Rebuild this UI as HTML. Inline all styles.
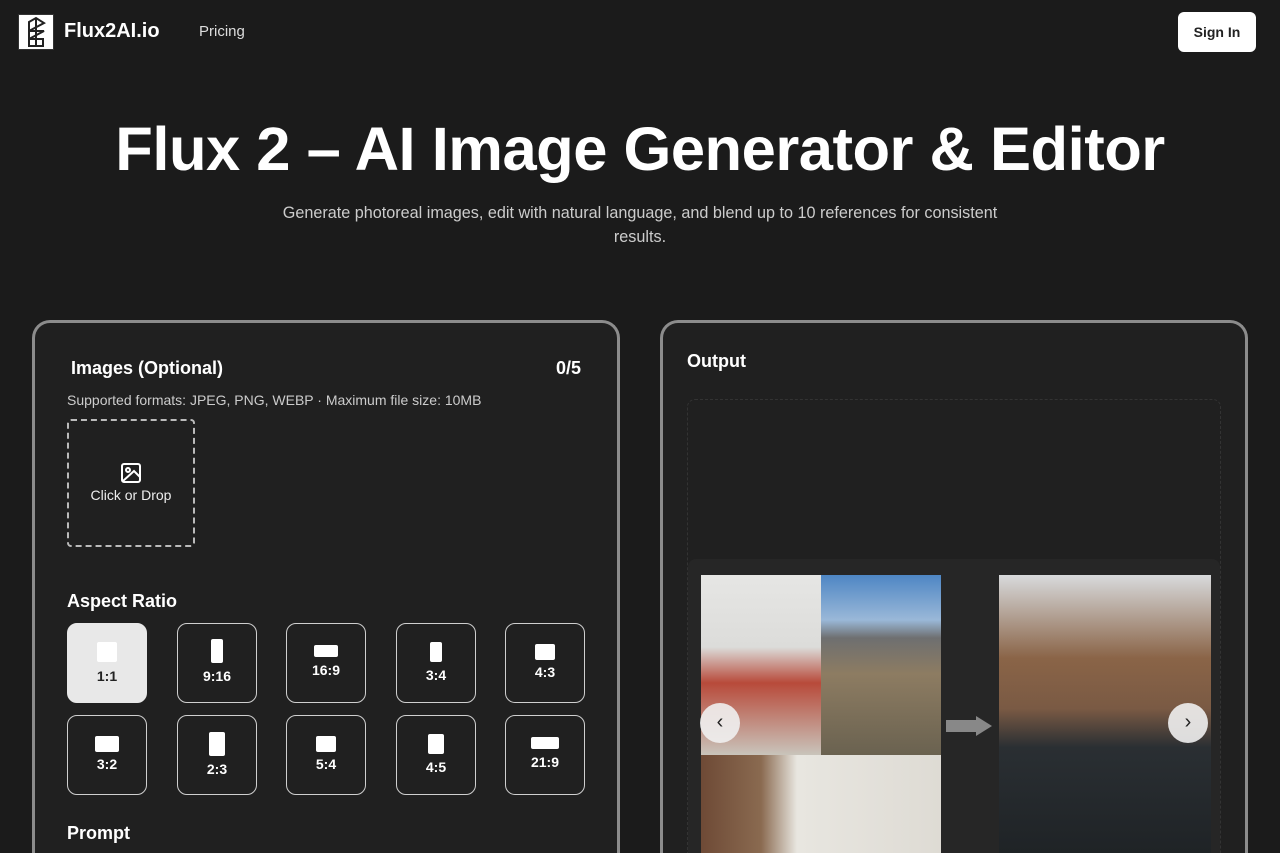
<!DOCTYPE html>
<html><head><style>
*{box-sizing:border-box;margin:0;padding:0}
html,body{width:1280px;height:853px;overflow:hidden}
body{background:#1b1b1b;font-family:"Liberation Sans",sans-serif;color:#fff}
#w{position:relative;width:1280px;height:853px;overflow:hidden}
.a{position:absolute}
.logo{left:18px;top:14px;width:36px;height:36px;background:#fff;border:1px solid #333}
.card{border:3px solid #8c8c8c;border-bottom:none;border-radius:18px 18px 0 0;background:#202020}
.btn{position:absolute;width:80px;height:80px;border:1px solid #cfcfcf;border-radius:10px;text-align:center;font-size:14px;font-weight:bold}
.btn i{display:block;background:#fff;border-radius:2px;margin:0 auto}
.btn.sel{background:#e8e8e8;color:#222;border-color:#e8e8e8}
</style></head><body><div id="w">
<div class="a logo"><svg width="34" height="34" viewBox="0 0 34 34" fill="none" stroke="#222" stroke-width="2"><path d="M10 7 L17 3 L25 8 L10 16 L25 16 L10 24 L24 24 L24 31 L10 31 Z M17 3 L17 31"/></svg></div>
<div class="a" style="left:64px;top:20px;font-size:20px;font-weight:bold">Flux2AI.io</div>
<div class="a" style="left:199px;top:23px;font-size:15px;color:#ddd">Pricing</div>
<div class="a" style="left:1178px;top:12px;width:78px;height:40px;background:#fff;border-radius:6px;color:#222;font-size:14px;font-weight:bold;text-align:center;line-height:40px">Sign In</div>
<div class="a" style="left:0;width:1280px;top:114px;text-align:center;font-size:61.5px;font-weight:bold;letter-spacing:-0.5px">Flux 2 – AI Image Generator &amp; Editor</div>
<div class="a" style="left:262px;width:756px;top:201px;text-align:center;font-size:16.2px;line-height:24px;color:#ccc">Generate photoreal images, edit with natural language, and blend up to 10 references for consistent results.</div>

<div class="a card" style="left:32px;top:320px;width:588px;height:533px"></div>
<div class="a" style="left:71px;top:358px;font-size:18px;font-weight:bold">Images (Optional)</div>
<div class="a" style="left:556px;top:358px;font-size:18px;font-weight:bold">0/5</div>
<div class="a" style="left:67px;top:392px;font-size:14px;color:#ccc">Supported formats: JPEG, PNG, WEBP · Maximum file size: 10MB</div>
<div class="a" style="left:67px;top:419px;width:128px;height:128px;border:2px dashed #bbb;border-radius:4px;text-align:center;font-size:14px;color:#eee;padding-top:41px">
<svg width="22" height="22" viewBox="0 0 22 22" fill="none" stroke="#fff" stroke-width="2"><rect x="2" y="2" width="18" height="18" rx="2"/><circle cx="8" cy="8" r="2"/><path d="M3 19 L14 9 L20 15"/></svg><br>Click or Drop</div>
<div class="a" style="left:67px;top:591px;font-size:18px;font-weight:bold">Aspect Ratio</div>

<div class="btn sel" style="left:67px;top:623px"><i style="width:20px;height:20px;margin-top:18px"></i><div style="margin-top:6px">1:1</div></div>
<div class="btn" style="left:177px;top:623px"><i style="width:12px;height:24px;margin-top:15px"></i><div style="margin-top:5px">9:16</div></div>
<div class="btn" style="left:286px;top:623px"><i style="width:24px;height:12px;margin-top:21px"></i><div style="margin-top:5px">16:9</div></div>
<div class="btn" style="left:396px;top:623px"><i style="width:12px;height:20px;margin-top:18px"></i><div style="margin-top:5px">3:4</div></div>
<div class="btn" style="left:505px;top:623px"><i style="width:20px;height:16px;margin-top:20px"></i><div style="margin-top:4px">4:3</div></div>
<div class="btn" style="left:67px;top:715px"><i style="width:24px;height:16px;margin-top:20px"></i><div style="margin-top:4px">3:2</div></div>
<div class="btn" style="left:177px;top:715px"><i style="width:16px;height:24px;margin-top:16px"></i><div style="margin-top:5px">2:3</div></div>
<div class="btn" style="left:286px;top:715px"><i style="width:20px;height:16px;margin-top:20px"></i><div style="margin-top:4px">5:4</div></div>
<div class="btn" style="left:396px;top:715px"><i style="width:16px;height:20px;margin-top:18px"></i><div style="margin-top:5px">4:5</div></div>
<div class="btn" style="left:505px;top:715px"><i style="width:28px;height:12px;margin-top:21px"></i><div style="margin-top:5px">21:9</div></div>
<div class="a" style="left:67px;top:823px;font-size:18px;font-weight:bold">Prompt</div>

<div class="a card" style="left:660px;top:320px;width:588px;height:533px"></div>
<div class="a" style="left:687px;top:351px;font-size:18px;font-weight:bold">Output</div>
<div class="a" style="left:687px;top:399px;width:534px;height:454px;border:1px dashed #333;border-bottom:none;border-radius:8px 8px 0 0"></div>
<div class="a" style="left:688px;top:559px;width:532px;height:294px;background:#262626;border-radius:8px 8px 0 0"></div>
<div class="a" style="left:701px;top:575px;width:120px;height:180px;background:linear-gradient(180deg,#e6e6e4 0%,#dcdcda 40%,#b84a3a 60%,#c9c4bb 100%)"></div>
<div class="a" style="left:821px;top:575px;width:120px;height:180px;background:linear-gradient(180deg,#4e86c4 0%,#9ab8d8 25%,#6e6f70 35%,#8d7c62 55%,#6a6250 100%)"></div>
<div class="a" style="left:701px;top:755px;width:240px;height:98px;background:linear-gradient(90deg,#6e4a36 0%,#8a6a50 25%,#e8e6e0 40%,#dedbd4 100%)"></div>
<div class="a" style="left:946px;top:720px;width:30px;height:12px;background:#888"></div>
<div class="a" style="left:976px;top:716px;width:0;height:0;border-left:16px solid #888;border-top:10px solid transparent;border-bottom:10px solid transparent"></div>
<div class="a" style="left:999px;top:575px;width:212px;height:278px;background:linear-gradient(180deg,#d8dadc 0%,#8a6447 30%,#7a5a44 48%,#2a2f33 62%,#1f2326 100%)"></div>
<div class="a" style="left:700px;top:703px;width:40px;height:40px;border-radius:50%;background:rgba(240,240,240,.9);color:#222;text-align:center;line-height:38px;font-size:20px">‹</div>
<div class="a" style="left:1168px;top:703px;width:40px;height:40px;border-radius:50%;background:rgba(240,240,240,.9);color:#222;text-align:center;line-height:38px;font-size:20px">›</div>
</div></body></html>
